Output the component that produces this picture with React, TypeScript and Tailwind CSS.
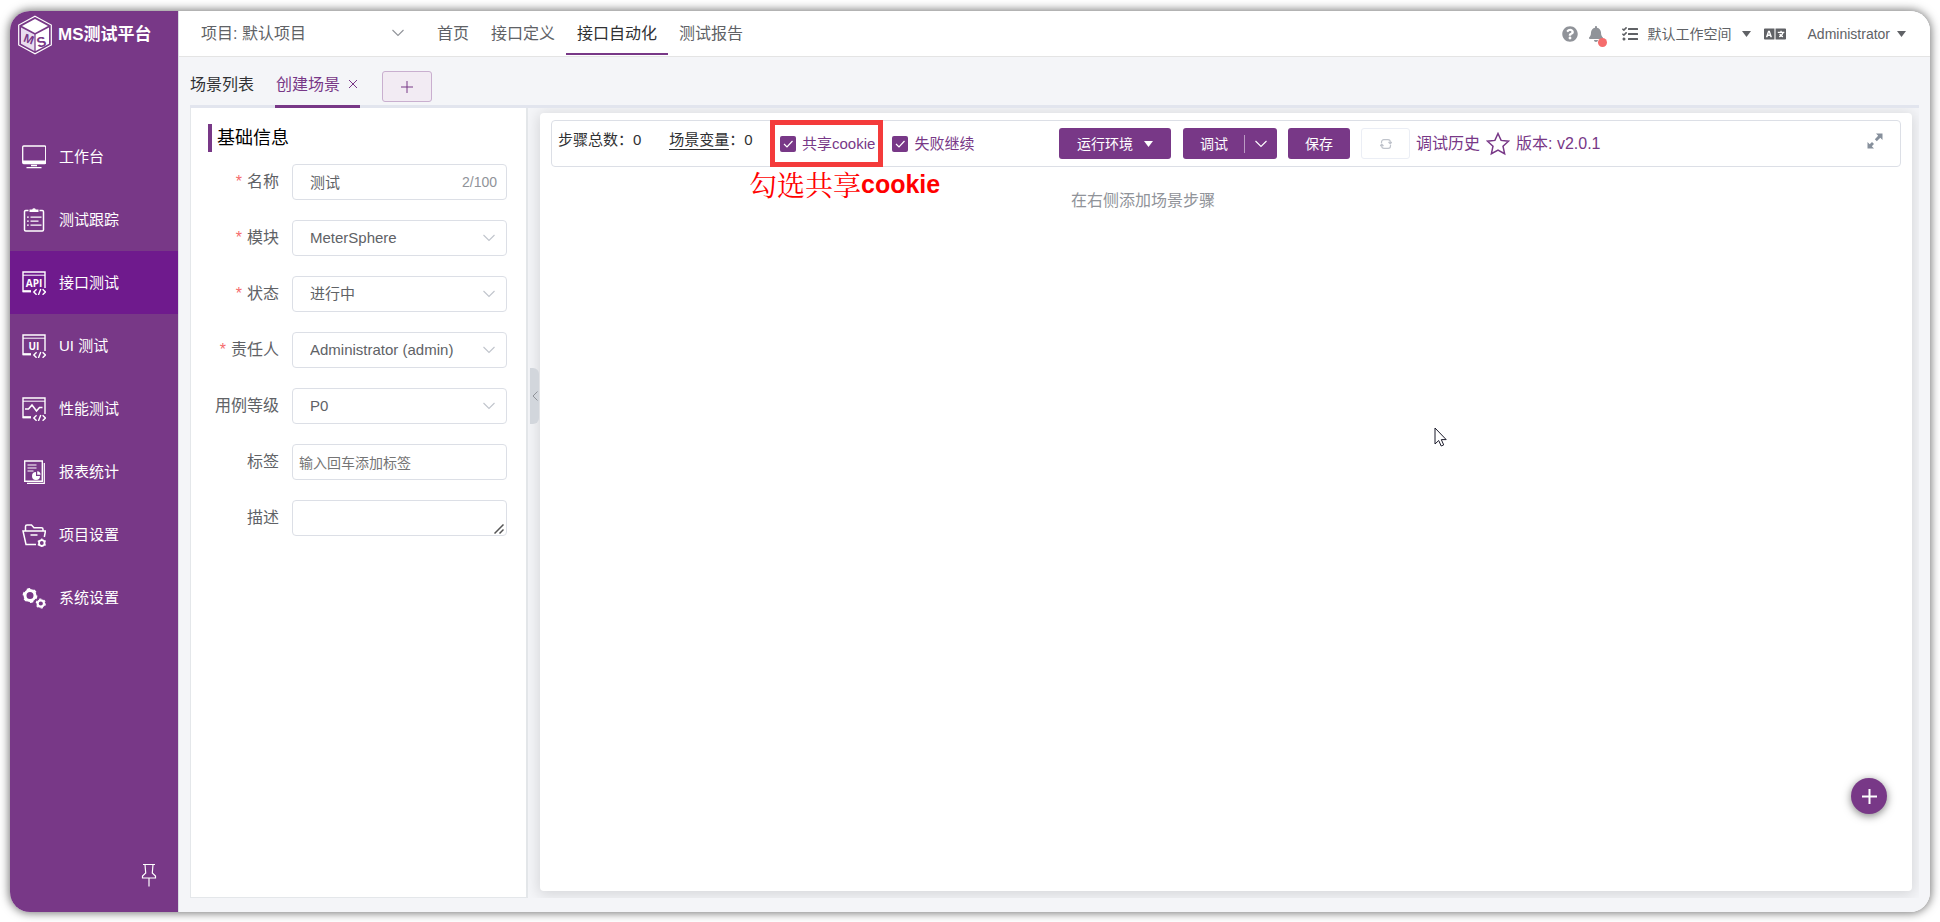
import type { ReactNode } from "react";
import { FaBell, FaLanguage, FaQuestionCircle, FaTasks } from "react-icons/fa";

function Svg({ size = 24, className = "", children }: { size?: number; className?: string; children: ReactNode }) {
  return (
    <svg
      width={size}
      height={size}
      viewBox={`0 0 ${size} ${size}`}
      fill="none"
      stroke="currentColor"
      className={`shrink-0 ${className}`}
      aria-hidden="true"
    >
      {children}
    </svg>
  );
}

function CodeFrame({ children }: { children: ReactNode }) {
  return (
    <Svg>
      <path d="M9 20.5H1V1h22v16" strokeWidth="1.4" />
      <path d="M1 4.2h22" strokeWidth="1" />
      <path d="M1 20.2h8" strokeWidth="2" />
      <path d="M14.6 18.2l-2.8 2.8 2.8 2.8M20.6 18.2l2.8 2.8-2.8 2.8M18.8 18l-2.4 6" strokeWidth="1.4" />
      {children}
    </Svg>
  );
}

function FrameLabel({ children }: { children: string }) {
  return (
    <text
      x="12"
      y="15.5"
      fontSize="10"
      fontWeight="bold"
      textAnchor="middle"
      fill="currentColor"
      stroke="none"
      fontFamily="'Open Sans', sans-serif"
    >
      {children}
    </text>
  );
}

const icons = {
  desk: (
    <Svg>
      <rect x="0.7" y="1" width="23" height="17.5" rx="1" strokeWidth="1.3" />
      <path d="M1 17h22.6" strokeWidth="3" />
      <path d="M9 20.5h6M4.5 22.6h15" strokeWidth="1.3" />
    </Svg>
  ),
  track: (
    <Svg>
      <path d="M6.5 2.5H3.7a1.2 1.2 0 0 0-1.2 1.2v18a1.2 1.2 0 0 0 1.2 1.2h16.6a1.2 1.2 0 0 0 1.2-1.2v-18a1.2 1.2 0 0 0-1.2-1.2h-2.8" strokeWidth="1.5" />
      <path d="M7.5 4h9V1.5h-2.7a1.9 1.9 0 0 0-3.6 0H7.5z" fill="currentColor" stroke="none" />
      <path d="M8.5 9.2h11M8.5 13.2h8M8.5 17.2h11" strokeWidth="1.3" />
      <path d="M5 9.2h1.8M5 13.2h1.8M5 17.2h1.8" strokeWidth="1.3" />
    </Svg>
  ),
  api: (
    <CodeFrame>
      <FrameLabel>API</FrameLabel>
    </CodeFrame>
  ),
  ui: (
    <CodeFrame>
      <FrameLabel>UI</FrameLabel>
    </CodeFrame>
  ),
  perf: (
    <CodeFrame>
      <path d="M3 12h3.5L10 8l4.5 6 3-3.5h3" strokeWidth="1.6" />
    </CodeFrame>
  ),
  report: (
    <Svg>
      <path d="M2.7 1h17.6v20.3H2.7z" strokeWidth="1.4" />
      <path d="M22.3 3v20.3H5" strokeWidth="1.2" />
      <path d="M5.5 5h9M5.5 8h9M5.5 11h6" strokeWidth="1.2" />
      <path d="M14 12v4h4a4 4 0 1 1-4-4z" fill="currentColor" stroke="none" />
      <path d="M15.2 11.300a3.600 3.600 0 0 1 3.400 3.400h-3.400z" fill="currentColor" stroke="none" />
    </Svg>
  ),
  folder: (
    <Svg>
      <path d="M3.5 8V3.5A1.5 1.5 0 0 1 5 2h4.500L12 4.800h7.500A1.500 1.500 0 0 1 21 6.300V8" strokeWidth="1.5" />
      <path d="M14 21.5H4L1 8h22.5l-1.2 6" strokeWidth="1.5" />
      <path d="M8.5 12h7" strokeWidth="1.5" />
      <circle cx="19.8" cy="20" r="2.8" strokeWidth="1.8" />
      <path d="M19.8 15.400v1.800M19.800 22.800v1.500M15.800 17.700l1.500.9M22.300 21.400l1.500.9M15.800 22.300l1.500-.9M22.300 18.600l1.500-.9" strokeWidth="1.3" />
    </Svg>
  ),
  gears: (
    <Svg>
      <circle cx="8" cy="9.500" r="5" strokeWidth="3" />
      <circle cx="8" cy="9.500" r="6.600" strokeWidth="1.6" strokeDasharray="3.45 3.46" />
      <circle cx="18.800" cy="17.500" r="3.200" strokeWidth="2.2" />
      <circle cx="18.800" cy="17.500" r="4.500" strokeWidth="1.2" strokeDasharray="2.35 2.36" />
    </Svg>
  ),
};

const navItems = [
  { label: "工作台", icon: icons.desk },
  { label: "测试跟踪", icon: icons.track },
  { label: "接口测试", icon: icons.api, active: true },
  { label: "UI 测试", icon: icons.ui },
  { label: "性能测试", icon: icons.perf },
  { label: "报表统计", icon: icons.report },
  { label: "项目设置", icon: icons.folder },
  { label: "系统设置", icon: icons.gears },
];

const menuItems = [
  { label: "首页" },
  { label: "接口定义" },
  { label: "接口自动化", active: true },
  { label: "测试报告" },
];

function Logo() {
  return (
    <svg width="36" height="40" viewBox="0 0 36 40" className="shrink-0" aria-hidden="true">
      <path d="M18 1.2L34.3 10v20L18 38.8 1.7 30V10z" fill="none" stroke="#fff" strokeWidth="1.2" />
      <path d="M18 4L31 11 18 18 5 11z" fill="#fff" />
      <path d="M4 12.5l13.4 7V36L4 28.8z" fill="#e9ddef" />
      <path d="M32 12.5l-13.4 7V36L32 28.800z" fill="#fff" />
      <g fill="#783887" fontFamily="'Liberation Sans', sans-serif" fontWeight="bold" textAnchor="middle">
        <text fontSize="12" transform="translate(10.5 28) rotate(20)">M</text>
        <text fontSize="14" transform="translate(25.5 31.5) rotate(-14)">S</text>
      </g>
    </svg>
  );
}

function Chevron({ className = "" }: { className?: string }) {
  return (
    <svg width="12" height="8" viewBox="0 0 12 8" fill="none" stroke="currentColor" className={className} aria-hidden="true">
      <path d="M0.5 1L6 6.5 11.5 1" strokeWidth="1.1" />
    </svg>
  );
}

function Caret() {
  return (
    <svg width="9" height="6" viewBox="0 0 9 6" fill="currentColor" aria-hidden="true">
      <path d="M0 0h9L4.5 6z" />
    </svg>
  );
}

function Sidebar() {
  return (
    <aside className="flex w-[168px] shrink-0 flex-col bg-[#783887] text-white">
      <div className="flex h-[114px] items-start gap-[5px] pl-[7px] pt-[4px]">
        <Logo />
        <h1 className="mt-2 whitespace-nowrap text-[17px] font-bold leading-6">MS测试平台</h1>
      </div>
      <nav>
        {navItems.map((n) => (
          <a
            key={n.label}
            href="#"
            className={`flex h-[63px] items-center gap-[13px] pl-3 text-[15px] ${n.active ? "bg-[#6f1a8d]" : ""}`}
          >
            {n.icon}
            <span className="pt-[2px]">{n.label}</span>
          </a>
        ))}
      </nav>
      <button type="button" aria-label="固定菜单" className="mb-[25px] ml-auto mr-[21px] mt-auto">
        <svg width="16" height="24" viewBox="0 0 16 24" fill="none" stroke="currentColor" strokeWidth="1.2">
          <path d="M2 1.5h12M4 1.5l.7 8.5L1.5 13v2h13v-2L11.300 10l.7-8.500M8 15v8.500" />
        </svg>
      </button>
    </aside>
  );
}

function Header() {
  return (
    <header className="flex h-[46px] shrink-0 items-center border-b border-[#e4e4e4] bg-white text-[#606266]">
      <button type="button" className="ml-[22px] flex w-[203px] items-center justify-between pt-px text-base leading-6">
        项目: 默认项目
        <Chevron className="mb-[2px] text-[#909399]" />
      </button>
      <nav className="ml-[22px] flex self-stretch">
        {menuItems.map((m) => (
          <a
            key={m.label}
            href="#"
            className={`mb-px flex items-center border-b-2 px-[11px] pt-[3px] text-base ${
              m.active ? "border-[#783887] text-[#303133]" : "border-transparent"
            }`}
          >
            {m.label}
          </a>
        ))}
      </nav>
      <div className="ml-auto mr-6 flex items-center text-sm">
        <a href="#" aria-label="帮助" className="text-[#909399]">
          <FaQuestionCircle size={16} />
        </a>
        <button type="button" aria-label="消息" className="relative ml-[10px] text-[#909399]">
          <FaBell size={16} />
          <span className="absolute -bottom-[5px] -right-[3px] size-[9px] rounded-full bg-[#f56c6c]" />
        </button>
        <button type="button" aria-label="任务" className="ml-[18px]">
          <FaTasks size={16} />
        </button>
        <button type="button" className="ml-[10px] flex items-center gap-[10px]">
          默认工作空间
          <Caret />
        </button>
        <button type="button" aria-label="语言" className="ml-[13px]">
          <FaLanguage size={22} />
        </button>
        <button type="button" className="ml-[22px] flex items-center gap-[7px]">
          Administrator
          <Caret />
        </button>
      </div>
    </header>
  );
}

function ContentTabs() {
  return (
    <div className="flex h-[51px] shrink-0 border-b-[3px] border-[#e2e5ee] text-base">
      <button type="button" className="pt-[7px] text-[#303133]">
        场景列表
      </button>
      <div className="-mb-[3px] ml-[21px] flex items-center gap-2 border-b-[3px] border-[#783887] px-px pt-2 text-[#783887]">
        <button type="button">创建场景</button>
        <button type="button" aria-label="关闭" className="mb-[2px] mr-px">
          <svg width="10" height="10" viewBox="0 0 10 10" stroke="currentColor" aria-hidden="true">
            <path d="M1 1l8 8M9 1l-8 8" />
          </svg>
        </button>
      </div>
      <button
        type="button"
        aria-label="新建标签"
        className="ml-[22px] mt-[14px] flex h-[31px] w-[50px] items-center justify-center rounded-[3px] border border-[#c9afcf] bg-[#f2ebf3] text-[#783887]"
      >
        <svg width="12" height="12" viewBox="0 0 12 12" stroke="currentColor" aria-hidden="true">
          <path d="M6 0v12M0 6h12" />
        </svg>
      </button>
    </div>
  );
}

function Field({ id, label, required, children }: { id: string; label: string; required?: boolean; children: ReactNode }) {
  return (
    <div className="flex items-center gap-[13px]">
      <label htmlFor={id} className="flex w-[71px] shrink-0 justify-end gap-[5px] whitespace-nowrap text-base leading-6">
        {required && <span className="text-[#f56c6c]">*</span>}
        {label}
      </label>
      <div className="relative min-w-0 flex-1">{children}</div>
    </div>
  );
}

const controlClass =
  "block h-9 w-full appearance-none rounded border border-[#dcdfe6] bg-white text-[15px] text-[#606266] outline-none";

function SelectField({ id, label, required, value }: { id: string; label: string; required?: boolean; value: string }) {
  return (
    <Field id={id} label={label} required={required}>
      <select id={id} className={`${controlClass} pl-[17px]`}>
        <option>{value}</option>
      </select>
      <Chevron className="pointer-events-none absolute right-3 top-[14px] text-[#c0c4cc]" />
    </Field>
  );
}

function BasicInfo() {
  return (
    <section className="w-[338px] shrink-0 border-b border-l border-r-2 border-[#e4e7ea] bg-white pl-[17px] pr-[19px] pt-4 text-[#606266]">
      <h2 className="flex h-7 items-center border-l-4 border-[#783887] pl-[5px] text-lg text-black">基础信息</h2>
      <form className="mt-3 flex flex-col gap-5">
        <Field id="name" label="名称" required>
          <input id="name" defaultValue="测试" className={`${controlClass} pb-[2px] pl-[17px] pr-14`} />
          <span className="absolute right-[10px] top-2 text-sm text-[#909399]">2/100</span>
        </Field>
        <SelectField id="module" label="模块" required value="MeterSphere" />
        <SelectField id="status" label="状态" required value="进行中" />
        <SelectField id="owner" label="责任人" required value="Administrator (admin)" />
        <SelectField id="level" label="用例等级" value="P0" />
        <Field id="tags" label="标签">
          <input
            id="tags"
            placeholder="输入回车添加标签"
            className={`${controlClass} px-[6px] placeholder:text-sm placeholder:text-[#757575]`}
          />
        </Field>
        <Field id="desc" label="描述">
          <textarea id="desc" rows={1} className={`${controlClass} resize-none`} />
          <svg
            width="10"
            height="10"
            viewBox="0 0 10 10"
            stroke="#555"
            className="pointer-events-none absolute bottom-[2px] right-[3px]"
            aria-hidden="true"
          >
            <path d="M0.5 9.5l9-9M5.5 9.5l4-4" strokeWidth="1.5" />
          </svg>
        </Field>
      </form>
    </section>
  );
}

function Check({ id, label, children }: { id: string; label: string; children?: ReactNode }) {
  return (
    <div className="relative flex items-center gap-[6px]">
      <span className="relative block size-4">
        <input id={id} type="checkbox" defaultChecked className="block size-4 appearance-none rounded-[2px] bg-[#783887]" />
        <svg
          width="16"
          height="16"
          viewBox="0 0 16 16"
          fill="none"
          stroke="#fff"
          className="pointer-events-none absolute inset-0"
          aria-hidden="true"
        >
          <path d="M4 8l3 3 5.5-6" strokeWidth="1.2" />
        </svg>
      </span>
      <label htmlFor={id} className="text-[15px] leading-6">
        {label}
      </label>
      {children}
    </div>
  );
}

function Toolbar() {
  return (
    <div className="flex h-[47px] items-center whitespace-nowrap rounded border border-[#dcdfe6] pl-[6px] pr-[17px] text-[#783887]">
      <div className="mb-2 flex w-[222px] text-[15px] leading-6 text-[#303133]">
        <span>步骤总数：0</span>
        <span className="ml-7">
          <a href="#" className="inline-block h-[22px] border-b border-[#303133]">
            场景变量
          </a>
          ：0
        </span>
      </div>
      <div className="flex w-[279px] gap-[17px]">
        <Check id="cookie" label="共享cookie">
          <span className="pointer-events-none absolute -left-[10px] -right-2 -top-[12px] h-[47px] border-[5px] border-[#f43b3b]" />
          <span className="pointer-events-none absolute -left-[31px] top-8 flex items-center font-['Noto_Serif_CJK_SC','Noto_Sans_CJK_SC',serif] text-[28px] leading-[40px] text-[#ff0000]">
            勾选共享
            <b className="font-['Liberation_Sans',sans-serif] text-[25px]">cookie</b>
          </span>
        </Check>
        <Check id="goon" label="失败继续" />
      </div>
      <div className="flex items-center text-sm">
        <button type="button" className="flex h-[31px] items-center gap-[11px] rounded-[3px] bg-[#783887] px-[18px] text-white">
          运行环境
          <Caret />
        </button>
        <div className="ml-3 flex h-[31px] items-center rounded-[3px] bg-[#783887] text-white">
          <button type="button" className="pl-[17px] pr-4">
            调试
          </button>
          <button type="button" aria-label="更多调试方式" className="flex h-[18px] items-center border-l border-[#bb9bc3] px-[10px]">
            <Chevron />
          </button>
        </div>
        <button type="button" className="ml-[11px] h-[31px] rounded-[3px] bg-[#783887] px-[17px] text-white">
          保存
        </button>
        <button
          type="button"
          disabled
          aria-label="刷新"
          className="ml-[11px] flex h-[31px] w-[49px] items-center justify-center rounded-[3px] border border-[#ebeef5] text-[#c0c4cc]"
        >
          <svg width="12" height="12" viewBox="0 0 12 12" fill="none" stroke="currentColor" strokeWidth="1.2" aria-hidden="true">
            <path d="M1.500 5V4A2.300 2.300 0 0 1 3.800 1.700H8A2.300 2.300 0 0 1 10.300 4v1.500M8.500 4l1.800 1.800L12 4M10.500 7v1A2.300 2.300 0 0 1 8.200 10.300H4A2.300 2.300 0 0 1 1.700 8V6.500M0 8l1.700-1.800L3.500 8" />
          </svg>
        </button>
      </div>
      <div className="ml-[6px] flex items-center gap-[6px] text-base">
        <a href="#">调试历史</a>
        <button type="button" aria-label="关注">
          <svg width="24" height="24" viewBox="0 0 24 24" fill="none" stroke="currentColor" strokeWidth="1.5" aria-hidden="true">
            <path d="M12 1.5l3.1 6.900 7.400.8-5.500 5 1.600 7.500L12 18l-6.600 3.700L7 14.200l-5.500-5 7.400-.8z" />
          </svg>
        </button>
        <span>版本: v2.0.1</span>
      </div>
      <button type="button" aria-label="全屏" className="mb-[5px] ml-auto text-[#87909c]">
        <svg width="16" height="16" viewBox="0 0 16 16" fill="currentColor" aria-hidden="true">
          <path d="M9 0.500h6.500V7l-2.200-2.200-3.500 3.400-2-2 3.400-3.500zM7 15.500H0.500V9l2.200 2.200L5 8.900l2 2-2.200 2.400z" />
        </svg>
      </button>
    </div>
  );
}

export default function App() {
  return (
    <div className="flex min-h-screen bg-white px-[10px] pb-[10px] pt-[11px] font-['Liberation_Sans','Noto_Sans_CJK_SC',sans-serif]">
      <div className="flex min-w-0 flex-1 overflow-hidden rounded-[20px] shadow-[0_0_10px_1px_rgba(0,0,0,0.55)]">
        <Sidebar />
        <div className="flex min-w-0 flex-1 flex-col border-l border-[#d9dce2] bg-[#f4f5f8]">
          <Header />
          <main className="mx-[11px] mb-[14px] flex flex-1 flex-col">
            <ContentTabs />
            <div className="flex flex-1 overflow-hidden">
              <BasicInfo />
              <div className="z-10 -mr-3 ml-[2px] flex w-[10px] shrink-0 items-center">
                <button
                  type="button"
                  aria-label="收起"
                  className="mb-[214px] flex h-14 w-[9px] items-center justify-center rounded-r-md bg-[#d2d6dc] text-[#909399]"
                >
                  <svg width="6" height="10" viewBox="0 0 6 10" fill="none" stroke="currentColor" aria-hidden="true">
                    <path d="M5.5 0.5L1 5l4.5 4.500" />
                  </svg>
                </button>
              </div>
              <section className="relative mb-[7px] ml-3 mr-[7px] mt-[5px] flex min-w-0 flex-1 flex-col rounded bg-white px-[11px] pt-[7px] shadow-[0_2px_14px_2px_rgba(0,0,0,0.12)]">
                <Toolbar />
                <p className="mt-[22px] text-center text-base text-[#909399] xl:mr-[166px]">在右侧添加场景步骤</p>
                <button
                  type="button"
                  aria-label="添加步骤"
                  className="mb-[77px] ml-auto mr-[14px] mt-auto flex size-9 items-center justify-center rounded-full bg-[#783887] text-white shadow-[0_2px_8px_rgba(0,0,0,0.5)]"
                >
                  <svg width="15" height="15" viewBox="0 0 15 15" stroke="currentColor" strokeWidth="2" aria-hidden="true">
                    <path d="M7.5 0v15M0 7.500h15" />
                  </svg>
                </button>
                <svg
                  width="13"
                  height="20"
                  viewBox="0 0 13 20"
                  className="pointer-events-none absolute left-[894px] top-[314px]"
                  aria-hidden="true"
                >
                  <path d="M1 1v16l3.700-3.500L7.200 19l2.500-1.100-2.400-5.300h4.900z" fill="#fff" stroke="#1b1b2b" />
                </svg>
              </section>
            </div>
          </main>
        </div>
      </div>
    </div>
  );
}
